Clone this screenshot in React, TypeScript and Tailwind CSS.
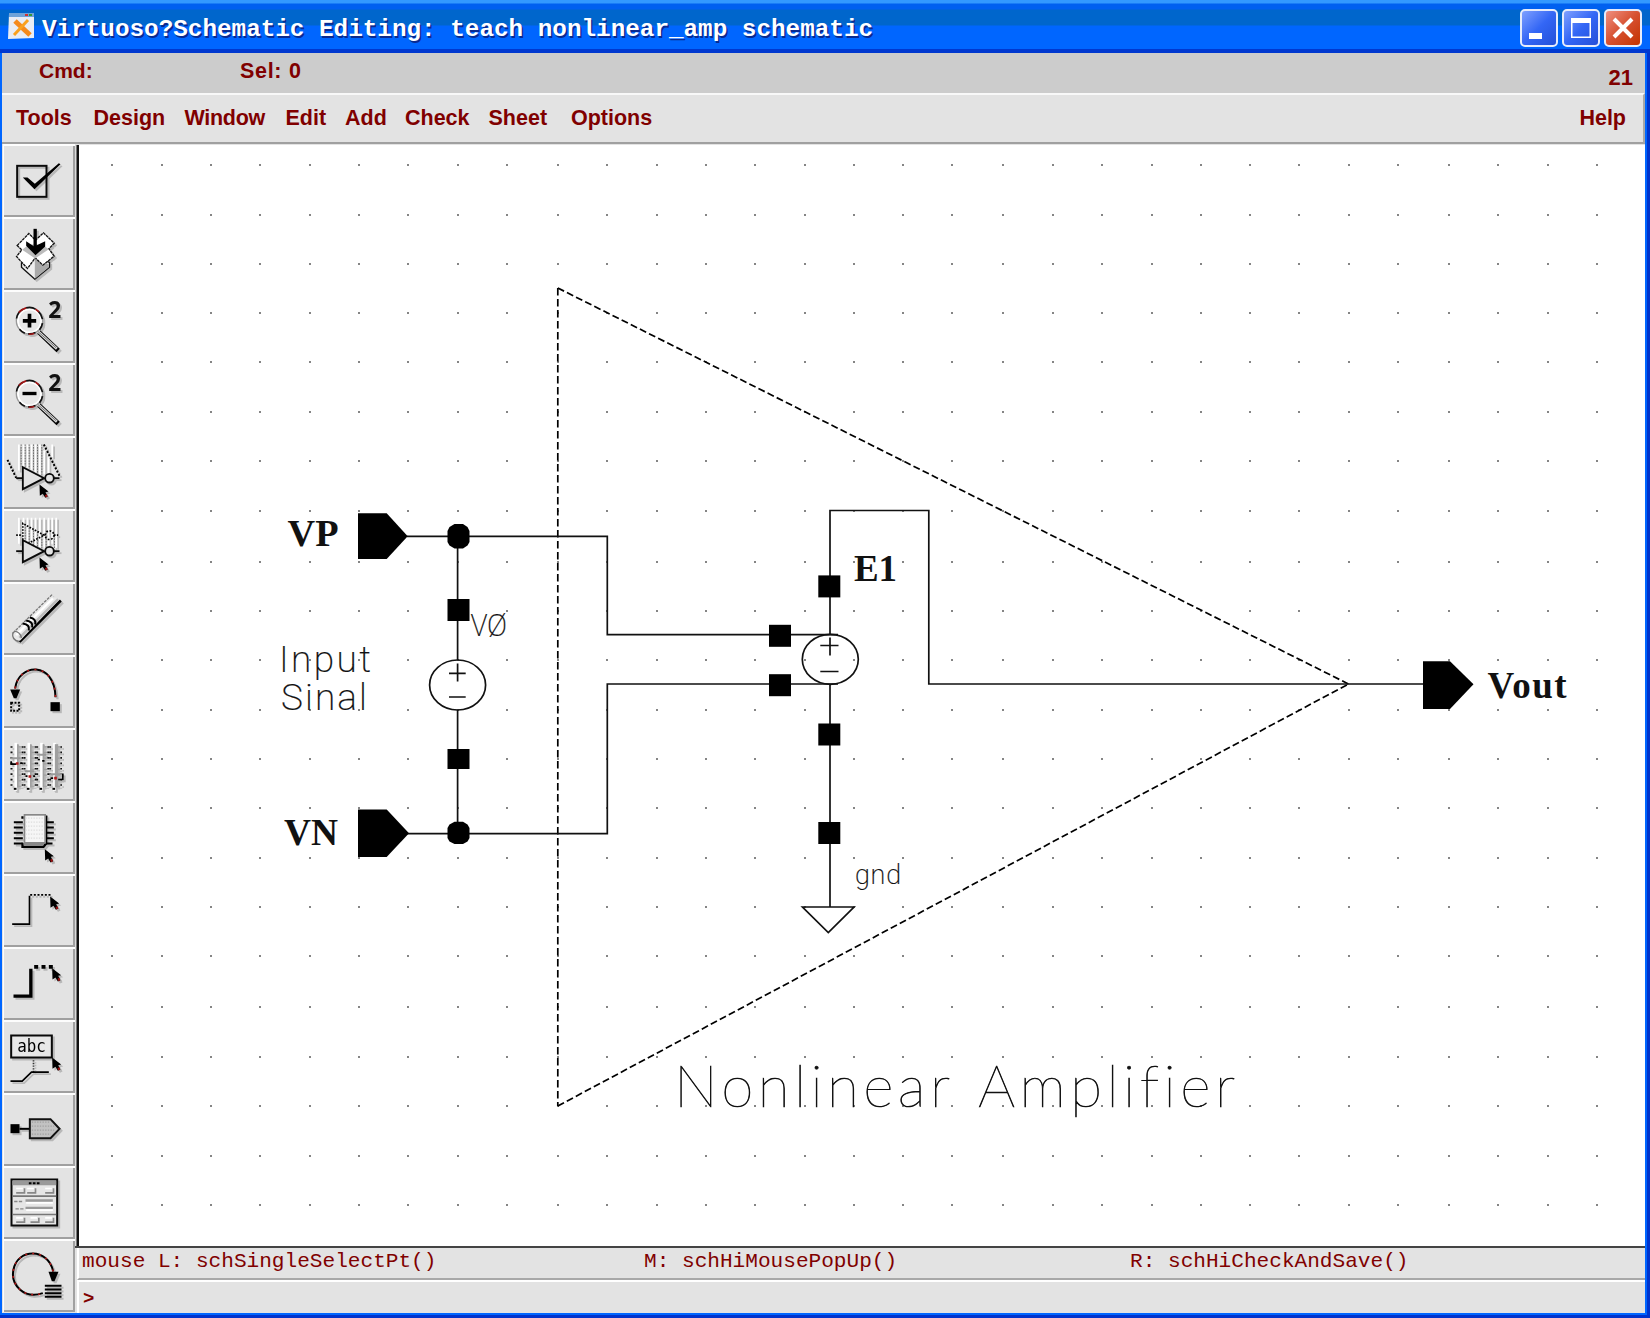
import React from "react";

const DOT_X = [
  112.3, 161.5, 210.8, 260.3, 309.5, 358.7, 408, 457.5, 506.6, 557.9, 607.4, 656.6, 705.8, 755.2, 804.5, 853.7, 903, 952.4,
  1003.2, 1052.7, 1102, 1151.5, 1200.7, 1250.2, 1299.4, 1348.7, 1398, 1449.4, 1498.4, 1547.7, 1597,
];
const DOT_Y = [
  165, 214.5, 264, 313.3, 362.3, 411.7, 461, 510.5, 561.5, 611, 660.3, 709.5, 758.7, 808.3, 857.6, 907, 956, 1007.3, 1056.7,
  1106, 1155.5, 1205,
];

const DARK = "#0a0a0a";

function Pointer({ x, y }: { x: number; y: number }) {
  return (
    <g transform={`translate(${x} ${y})`}>
      <path d="M0 0 L27 21 L18 23 L25 36 L17 40 L10 28 L1 34 Z" fill="#000" />
      <path d="M16 32 l6 -3 l2 7 l-5 3 Z" fill="#a01010" />
    </g>
  );
}

function Magnifier({ top, children }: { top: number; children: React.ReactNode }) {
  return (
    <g transform={`translate(0 ${top})`}>
      <path d="M118 127 L176 182" stroke="#000" strokeWidth="14" />
      <path d="M115 124 L172 177" stroke="#d8d8d8" strokeWidth="8" />
      <path d="M112 122 L170 174" stroke="#777" strokeWidth="3" />
      <circle cx="90" cy="93" r="35" fill="#e8e8e8" stroke="#fff" strokeWidth="6" />
      <circle cx="90" cy="93" r="39.5" fill="none" stroke="#999" strokeWidth="4" />
      <path d="M51 86 Q54 66 70 58 M80 54 Q96 50 108 58 M116 64 Q126 74 129 88 M129 100 Q127 112 120 120 M108 128 Q98 133 86 132 M76 130 Q66 126 60 118" stroke="#111" strokeWidth="5" fill="none" />
      <path d="M58 68 Q66 58 80 54 M108 58 L118 66 M88 133 Q96 134 104 131" stroke="#a01414" strokeWidth="5" fill="none" />
      {children}
      <text x="146" y="84" fontFamily="'Noto Sans', sans-serif" fontWeight="700" fontSize="68" fill="#111">
        2
      </text>
    </g>
  );
}

function Inverter({ y }: { y: number }) {
  return (
    <g stroke={DARK} strokeWidth="5.5" fill="none">
      <path d={`M50 ${y} H69`} />
      <path d={`M70 ${y - 33} V${y + 33} L134 ${y} Z`} fill="#e3e3e3" />
      <circle cx="150" cy={y} r="13" fill="#e3e3e3" />
      <path d={`M163 ${y} H180`} />
    </g>
  );
}

const icons: { name: string; top: number; art: React.ReactNode }[] = [
  {
    name: "Check and Save",
    top: 12,
    art: (
      <>
        <rect x="53" y="76" width="88" height="93" fill="none" stroke={DARK} strokeWidth="6" />
        <path d="M70 111 L84 111 L106 130 L178 68 L183 71 L105 146 Z" fill="#000" />
      </>
    ),
  },
  {
    name: "Save",
    top: 231,
    art: (
      <>
        <path d="M66 368 L106 347 L150 366 L150 380 L106 416 L66 380 Z" fill="#eee" stroke="#111" strokeWidth="4" />
        <path d="M106 352 L148 372 L148 380 L106 415 Z" fill="#aaa" />
        <path
          d="M53 315 L88 279 L108 299 L132 277 L164 308 L148 325 L164 347 L130 374 L107 352 L84 384 L51 348 L67 328 Z"
          fill="#fff"
          stroke="#111"
          strokeWidth="4"
          strokeDasharray="9 2"
        />
        <path d="M68 328 L88 312 L128 312 L148 326 L107 354 Z" fill="#bbb" />
        <path d="M107 265 V322" stroke="#000" strokeWidth="10" />
        <path d="M80 302 L104 318 L137 302 L137 318 L108 344 L80 316 Z" fill="#000" />
      </>
    ),
  },
  {
    name: "Zoom In",
    top: 450,
    art: (
      <Magnifier top={448}>
        <path d="M70 93 H110 M90 72 V113" stroke="#000" strokeWidth="11" />
      </Magnifier>
    ),
  },
  {
    name: "Zoom Out",
    top: 669,
    art: (
      <Magnifier top={667}>
        <path d="M69 92 H111" stroke="#000" strokeWidth="10" />
      </Magnifier>
    ),
  },
  {
    name: "Stretch",
    top: 18,
    art: (
      <>
        <path d="M58 42 V120 M72 42 V108 M84 42 V112 M96 42 V118 M108 42 V126 M121 42 V132 M134 60 V132 M147 80 V128 M158 42 V80" stroke="#fff" strokeWidth="5" />
        <path d="M65 42 V108 M77 42 V108 M89 42 V114 M102 42 V120 M114 42 V126 M127 42 V132" stroke="#666" strokeWidth="3" strokeDasharray="4 4" />
        <path d="M24 88 L50 142 M133 42 L181 138" stroke="#000" strokeWidth="6" strokeDasharray="6 5" />
        <Inverter y={143} />
        <Pointer x={120} y={162} />
      </>
    ),
  },
  {
    name: "Copy",
    top: 237,
    art: (
      <>
        <path d="M58 262 V340 M72 262 V330 M84 262 V332 M96 262 V338 M108 262 V346 M121 262 V350 M134 262 V352 M147 262 V346 M158 262 V340 M170 262 V352" stroke="#fff" strokeWidth="5" />
        <path d="M77 290 V334 M89 292 V338 M102 300 V344 M114 304 V350 M127 310 V352 M140 300 V350 M165 316 V352" stroke="#666" strokeWidth="3" strokeDasharray="4 4" />
        <path d="M50 314 H66 M70 346 V279 L134 314 L72 346 M163 314 H176" stroke="#000" strokeWidth="5" strokeDasharray="5 4" fill="none" />
        <circle cx="150" cy="314" r="13" stroke="#000" strokeWidth="5" strokeDasharray="5 5" fill="none" />
        <Inverter y={362} />
        <Pointer x={120} y={381} />
      </>
    ),
  },
  {
    name: "Delete",
    top: 456,
    art: (
      <>
        <path d="M60 634 L184 510" stroke="#000" strokeWidth="8" />
        <path d="M38 612 L150 496 L180 506 L62 630 Q42 634 38 612 Z" fill="#e9e9e9" />
        <path d="M40 608 L158 492" stroke="#777" strokeWidth="4" strokeDasharray="9 3" />
        <path d="M60 622 L176 506" stroke="#bbb" strokeWidth="8" />
        <path d="M50 614 L160 504" stroke="#fff" strokeWidth="7" />
        <path d="M40 606 Q36 628 58 633 M44 602 Q62 604 66 622" stroke="#777" strokeWidth="4" fill="none" />
        <path d="M70 579 Q92 582 88 600 M80 570 Q102 573 98 591 M91 561 Q111 565 107 582" stroke="#000" strokeWidth="6" fill="none" />
      </>
    ),
  },
  {
    name: "Undo",
    top: 675,
    art: (
      <>
        <path d="M47 774 C56 698 166 690 168 800" stroke="#000" strokeWidth="6" fill="none" />
        <path d="M47 774 C56 698 166 690 168 800" stroke="#b01818" strokeWidth="5" strokeDasharray="6 16" fill="none" />
        <path d="M32 777 H62 L51 803 H43 Z" fill="#000" />
        <rect x="153" y="815" width="28" height="27" fill="#000" />
        <rect x="35" y="817" width="24" height="24" fill="none" stroke="#000" strokeWidth="6" strokeDasharray="6 4" />
      </>
    ),
  },
  {
    name: "Property",
    top: 9,
    art: (
      <>
        {[52, 91, 129, 168].map((x, i) => (
          <g key={x}>
            <path d={`M${x - 3} 52 V196`} stroke="#fff" strokeWidth="8" />
            <path d={`M${x + 3} 56 V186`} stroke="#a0a0a0" strokeWidth={i === 3 ? 10 : 5} />
            <path d={`M${x + 9} 62 V184`} stroke="#a0a0a0" strokeWidth="10" strokeDasharray="4 13" />
            <path d={`M${x - 16} 62 V184`} stroke="#111" strokeWidth="6" strokeDasharray="5 11.3" />
            <path d={`M${x + 17} 62 V184`} stroke="#111" strokeWidth="5" strokeDasharray="5 11.3" />
            <path d={`M${x - 9} 190 h8`} stroke="#000" strokeWidth="6" />
          </g>
        ))}
        <path d="M34 98 H62 M76 137 H104 M112 88 H140 M150 146 H188" stroke="#999" strokeWidth="6" />
        <path d="M35 107 V116 H50 M62 113 h6 M78 152 h6 M101 152 h6 M115 102 h6 M128 106 h7 M153 158 h8 M176 162 H190 V144" stroke="#000" strokeWidth="5" fill="none" />
        <path d="M49 114 h8 M87 153 h8 M164 158 h8" stroke="#b01818" strokeWidth="8" />
      </>
    ),
  },
  {
    name: "Component",
    top: 228,
    art: (
      <>
        <path d="M43 290 H70 M43 306 H70 M43 322 H70 M43 338 H70 M43 354 H70 M138 290 H163 M138 306 H163 M138 322 H163 M138 338 H163 M138 354 H159" stroke="#000" strokeWidth="6" />
        <path d="M69 272 V280 M69 352 V364 H132 L140 354 V270" stroke="#000" strokeWidth="7" fill="none" />
        <rect x="75" y="268" width="62" height="84" fill="#f6f6f6" stroke="#888" strokeWidth="5" />
        <path d="M78 278 H134 M78 290 H134 M78 302 H134 M78 314 H134 M78 326 H134 M78 338 H134" stroke="#dcdcdc" strokeWidth="4" strokeDasharray="4 4" />
        <path d="M73 356 H133" stroke="#888" strokeWidth="7" />
        <Pointer x={136} y={371} />
      </>
    ),
  },
  {
    name: "Wire (Narrow)",
    top: 447,
    art: (
      <>
        <path d="M38 596 H90 V511" stroke="#000" strokeWidth="5" fill="none" />
        <path d="M92 508 H156" stroke="#000" strokeWidth="5" strokeDasharray="6 5" />
        <Pointer x={152} y={513} />
      </>
    ),
  },
  {
    name: "Wire (Wide)",
    top: 666,
    art: (
      <>
        <path d="M42 812 H94 V730" stroke="#000" strokeWidth="10" fill="none" />
        <path d="M104 724 H160" stroke="#000" strokeWidth="11" strokeDasharray="12 10" />
        <Pointer x={158} y={728} />
      </>
    ),
  },
  {
    name: "Wire Name",
    top: 15,
    art: (
      <>
        <rect x="35" y="60" width="122" height="66" fill="#e8e8e8" stroke={DARK} strokeWidth="6" />
        <text x="53" y="110" textLength="86" lengthAdjust="spacingAndGlyphs" fontFamily="'DejaVu Sans Mono', monospace" fontWeight="400" fontSize="54" fill="#000">
          abc
        </text>
        <path d="M102 134 V170" stroke="#333" strokeWidth="5" strokeDasharray="4 4" />
        <path d="M33 197 H68 L96 170 H148" stroke="#000" strokeWidth="5" fill="none" />
        <Pointer x={158} y={126} />
      </>
    ),
  },
  {
    name: "Pin",
    top: 234,
    art: (
      <>
        <rect x="33" y="326" width="27" height="27" fill="#000" />
        <path d="M60 340 H90" stroke="#000" strokeWidth="6" />
        <path d="M91 311 H153 L180 340 L153 368 H91 Z" fill="#c2c2c2" stroke="#111" strokeWidth="6" />
        <path d="M97 320 H150 M97 332 H164 M97 344 H164 M97 356 H154" stroke="#a0a0a0" strokeWidth="4" strokeDasharray="4 4" />
      </>
    ),
  },
  {
    name: "Cmd Options",
    top: 453,
    art: (
      <>
        <rect x="36" y="492" width="137" height="138" fill="#e6e6e6" stroke={DARK} strokeWidth="6" />
        <path d="M39 502 H170" stroke="#999" strokeWidth="14" />
        <path d="M88 503 H122" stroke="#000" strokeWidth="6" strokeDasharray="8 4" />
        <path d="M39 542 H170 M39 597 H170" stroke="#777" strokeWidth="5" />
        <path d="M50 532 H75 V518 M83 532 H108 V518 M137 532 H162 V518 M50 620 H75 V607 M93 620 H118 V607 M137 620 H162 V607" stroke="#888" strokeWidth="5" fill="none" />
        <path d="M50 519 H70 M83 519 H103 M137 519 H157 M50 607 H70 M93 607 H113 M137 607 H157 M80 562 H160 M80 584 H160" stroke="#fff" strokeWidth="5" />
        <path d="M78 555 H160 M78 577 H160" stroke="#999" strokeWidth="7" />
        <path d="M44 558 H72 M48 580 H72" stroke="#888" strokeWidth="4" strokeDasharray="10 4" />
      </>
    ),
  },
  {
    name: "Repeat",
    top: 672,
    art: (
      <>
        <path d="M161 768 C146 696 54 698 42 762 C32 810 76 852 130 833" stroke="#000" strokeWidth="6" fill="none" />
        <path d="M161 768 C146 696 54 698 42 762 C32 810 76 852 130 833" stroke="#b01818" strokeWidth="5" strokeDasharray="6 15" fill="none" />
        <path d="M147 769 H177 L165 797 H157 Z" fill="#000" />
        <path d="M136 811 H186 M136 822 H186 M136 833 H186 M136 844 H186" stroke="#000" strokeWidth="6" />
      </>
    ),
  },
];

function Toolbar() {
  return (
    <aside className="flex w-[73px] shrink-0 flex-col pl-px">
      {icons.map((icon) => (
        <button
          key={icon.name}
          aria-label={icon.name}
          className="h-[73px] w-[72px] shrink-0 bg-[#e3e3e3] shadow-[inset_1px_2px_0_#fdfdfd,inset_-2px_-2px_0_#a0a0a0]"
        >
          <svg width="72" height="73" viewBox={`10.5 ${icon.top - 1.5} 216 219`} className="block drop-shadow-[2px_2px_0.5px_#b8b8b8]">
            {icon.art}
          </svg>
        </button>
      ))}
    </aside>
  );
}

function Pad({ x, y, h = 22 }: { x: number; y: number; h?: number }) {
  return <rect x={x} y={y} width="22" height={h} fill="#000" />;
}

function Schematic() {
  return (
    <svg width="1566" height="1101" viewBox="79 145 1566 1101" className="block shrink-0 bg-white">
      <g fill="#858585">
        {DOT_Y.map((y) => DOT_X.map((x) => <rect key={`${x}-${y}`} x={Math.round(x - 1)} y={Math.round(y - 1)} width="2" height="2" />))}
      </g>

      <g fill="none" stroke="#000" strokeWidth="1.7">
        <path d="M557.8 288 V1106" strokeDasharray="7.4 3.6" />
        <path d="M557.8 288 L1348.5 684" strokeDasharray="7 3.2" />
        <path d="M557.8 1106 L1348.5 684" strokeDasharray="7 3.2" />
      </g>

      <g fill="none" stroke="#111" strokeWidth="1.7">
        <path d="M407 536.3 H607.3 V634.7 H838" />
        <path d="M407 833.7 H607.3 V684 H838" />
        <path d="M457.6 536 V660 M457.6 710 V833" />
        <ellipse cx="457.6" cy="685" rx="28" ry="25" />
        <path d="M449 673.3 H465.7 M457.6 663.5 V681.5 M449 697 H465.7" />
        <path d="M830 634.7 V510.5 H928.8 V684 H1423" />
        <ellipse cx="830.3" cy="659.3" rx="28" ry="25" />
        <path d="M820.3 645.5 H838.5 M830 637.5 V655.5 M820.3 671.5 H838.5" />
        <path d="M830 684 V907" />
        <path d="M802.5 907 H854 L828.3 932.5 Z" />
      </g>

      <g fill="#000">
        <path d="M358 513.3 H386.7 L407.7 536.3 L386.7 559 H358 Z" />
        <path d="M358 809.5 H386.7 L409 833.3 L386.7 857 H358 Z" />
        <path d="M1423 661.3 H1450 L1473.5 684.3 L1450 709 H1423 Z" />
        <path d="M454.5 524 H463 L467.5 527 L469.5 531 V542 L467.5 545.5 L463 548.5 H454.5 L449.5 545.5 L447.5 542 V531 L449.5 527 Z" />
        <path d="M454.5 821.7 H463 L467.5 824.5 L469.5 828 V838 L467.5 841.5 L463 844 H454.5 L449.5 841.5 L447.5 838 V828 L449.5 824.5 Z" />
      </g>
      <Pad x={447.5} y={599} />
      <Pad x={447.5} y={749} h={20} />
      <Pad x={818.3} y={575.4} />
      <Pad x={769} y={624.8} />
      <Pad x={769} y={674.2} />
      <Pad x={818.3} y={723.5} />
      <Pad x={818.3} y={822} />

      <g fontFamily="'Liberation Serif', serif" fontWeight="700" fontSize="37" fill="#111">
        <text x="287.5" y="546" textLength="51" lengthAdjust="spacingAndGlyphs">VP</text>
        <text x="284" y="845" textLength="54" lengthAdjust="spacingAndGlyphs">VN</text>
        <text x="854" y="580.5" textLength="43" lengthAdjust="spacing">E1</text>
        <text x="1487.5" y="698" textLength="79" lengthAdjust="spacing">Vout</text>
      </g>

      <g fontFamily="Roboto, sans-serif" fontWeight="200" fill="#111" stroke="#111" strokeWidth="0.2">
        <text x="470.5" y="636" fontSize="32" textLength="17" lengthAdjust="spacingAndGlyphs">V</text>
        <text x="487" y="636" fontSize="32" textLength="20" lengthAdjust="spacingAndGlyphs">Ø</text>
        <text x="279" y="672" fontSize="37" textLength="92" lengthAdjust="spacing">Input</text>
        <text x="281" y="710" fontSize="37" textLength="86" lengthAdjust="spacing">Sinal</text>
        <text x="855" y="884" fontSize="27" textLength="46" lengthAdjust="spacing">gnd</text>
      </g>
      <g fontFamily="Lato, sans-serif" fontWeight="100" fontSize="58.5" fill="#111" stroke="#111" strokeWidth="0.7" className="[font-variant-ligatures:none]">
        <text x="674" y="1106.5" textLength="276" lengthAdjust="spacing">Nonlinear</text>
        <text x="978" y="1106.5" textLength="257" lengthAdjust="spacing">Amplifier</text>
      </g>
    </svg>
  );
}

const caption = "h-[38px] w-[38px] rounded-[5px] border-2 border-[#e6ecfb]";

function TitleBar() {
  return (
    <header className="flex h-[53px] shrink-0 items-start border-b-4 border-[#0038cf] bg-[linear-gradient(#3399ff_0_3px,#0060f0_4px_9px,#0066cc_10px_25px,#0066ff_26px)] pt-[9px] pr-[8px] pl-[7px]">
      <svg width="28" height="28" viewBox="0 0 28 28" className="mt-[3px]">
        <path d="M2 2 H27 V26 L1 27 Z" fill="#e9edf5" />
        <path d="M2 1 H27 V5 H2 Z" fill="#6fa3d8" />
        <path d="M18 2 h3 v2 h-3 z" fill="#c33" />
        <path d="M22 2 h3 v2 h-3 z" fill="#393" />
        <path d="M8 9 L23 23" stroke="#f58a1c" strokeWidth="5" />
        <path d="M21 8 L7 23" stroke="#f9a11f" strokeWidth="3" />
      </svg>
      <h1 className="ml-[7px] flex-1 pt-[7px] font-['Liberation_Mono',monospace] text-[24.3px] leading-[28px] font-bold whitespace-pre text-white [text-shadow:1.5px_1.5px_0_#0a2a90]">
        Virtuoso?Schematic Editing: teach nonlinear_amp schematic
      </h1>
      <div className="flex gap-[4px]">
        <button aria-label="Minimize" className={`${caption} bg-[linear-gradient(135deg,#7fa0ff,#3366f5_50%,#2450d8)]`}>
          <svg width="34" height="34" viewBox="0 0 34 34">
            <rect x="7" y="22" width="13" height="6" fill="#fff" />
          </svg>
        </button>
        <button aria-label="Maximize" className={`${caption} bg-[linear-gradient(135deg,#7fa0ff,#3366f5_50%,#2450d8)]`}>
          <svg width="34" height="34" viewBox="0 0 34 34">
            <path d="M7 7 H27 V27 H7 Z M8.5 12 V25.5 H25.5 V12 Z" fill="#fff" fillRule="evenodd" />
          </svg>
        </button>
        <button aria-label="Close" className={`${caption} bg-[linear-gradient(135deg,#f09080,#d65030_50%,#c43300)]`}>
          <svg width="34" height="34" viewBox="0 0 34 34">
            <path d="M8 8 L26 26 M26 8 L8 26" stroke="#fff" strokeWidth="4" />
          </svg>
        </button>
      </div>
    </header>
  );
}

export default function App() {
  return (
    <div className="flex h-[1318px] w-[1650px] flex-col overflow-hidden bg-[#e3e3e3] font-['Liberation_Sans',sans-serif] text-[21px] font-bold text-[#800000]">
      <TitleBar />
      <div className="flex min-h-0 flex-1 flex-col border-r-[3px] border-b-[3px] border-[#0033cc]">
        <div className="flex min-h-0 flex-1 flex-col border-r-2 border-b-2 border-l-2 border-[#0066ff]">
          <div className="flex h-[40px] shrink-0 bg-[#cccccc] pr-[12px] pl-[37px] leading-[24px]">
            <span className="w-[201px] pt-[6px]">Cmd:</span>
            <span className="flex-1 pt-[6px] text-[21.5px] tracking-[0.7px]">Sel: 0</span>
            <span className="pt-[13px] text-[22px]">21</span>
          </div>
          <nav className="flex h-[51px] shrink-0 border-t-2 border-r-2 border-b-2 border-t-[#f8f8f8] border-r-[#a8a8a8] border-b-[#a0a0a0] pt-[11px] pr-[17px] pl-[14px] text-[21.5px] leading-[24px]">
            <span className="w-[77.5px]">Tools</span>
            <span className="w-[91px]">Design</span>
            <span className="w-[101px] tracking-[-0.3px]">Window</span>
            <span className="w-[59.5px]">Edit</span>
            <span className="w-[60px]">Add</span>
            <span className="w-[83.5px]">Check</span>
            <span className="w-[82.5px]">Sheet</span>
            <span className="flex-1">Options</span>
            <span>Help</span>
          </nav>
          <div className="flex min-h-0 flex-1">
            <Toolbar />
            <main className="flex min-w-0 flex-1 flex-col">
              <div className="flex h-[1104px] shrink-0 border-b-2 border-[#444] pt-px">
                <div className="h-full w-[4px] shrink-0 bg-[linear-gradient(90deg,#dcdcdc_1px,#777_1px_2px,#111_2px)]" />
                <Schematic />
              </div>
              <div className="ml-[2px] flex h-[32px] shrink-0 border-b-2 border-l-2 border-b-[#a8a8a8] border-l-white pt-[1px] pl-[3px] font-['Liberation_Mono',monospace] text-[21.1px] leading-[24px] font-normal">
                <span className="w-[562px]">mouse L: schSingleSelectPt()</span>
                <span className="w-[486px]">M: schHiMousePopUp()</span>
                <span>R: schHiCheckAndSave()</span>
              </div>
              <div className="ml-[2px] flex-1 border-t-2 border-l-2 border-white pt-[5px] pl-[4px] font-['Liberation_Mono',monospace] text-[19px] leading-[24px]">
                &gt;
              </div>
            </main>
          </div>
        </div>
      </div>
    </div>
  );
}
